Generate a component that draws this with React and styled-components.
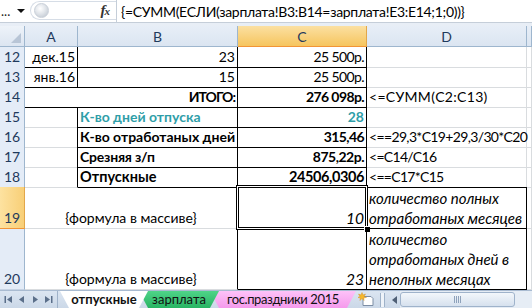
import styled, { createGlobalStyle } from 'styled-components';

const GlobalStyle = createGlobalStyle`
  html, body { margin: 0; padding: 0; background: #fff; }
  body {
    width: 532px;
    height: 308px;
    overflow: hidden;
    font-family: Lato, 'Liberation Sans', sans-serif;
    font-size: 14px;
    color: #000;
  }
`;

const COLS = '25px 53px 160px 129px 160px 1fr';
const GRID = '#d9dcdf';
const BLACK = '#000';

const Window = styled.div`
  width: 532px;
  height: 308px;
  display: flex;
  flex-direction: column;
  overflow: hidden;
  background: #fff;
`;

const FormulaBar = styled.div`
  height: 23px;
  display: flex;
  align-items: stretch;
  background: #fff;
  border-bottom: 1px solid #c5ced9;
  box-sizing: border-box;
`;

const NameBox = styled.div`
  width: 30px;
  display: flex;
  align-items: center;
  justify-content: space-between;
  padding: 0 5px 0 1px;
  box-sizing: border-box;
  font-size: 13px;
  color: #222;
`;

const Arrow = styled.span`
  width: 0;
  height: 0;
  border-left: 4px solid transparent;
  border-right: 4px solid transparent;
  border-top: 4px solid #111;
`;

const ButtonGroup = styled.div`
  width: 86px;
  margin: 1px 0 2px;
  display: flex;
  align-items: center;
  justify-content: space-between;
  border: 1px solid #d6dde6;
  border-right: none;
  border-radius: 10px 0 0 10px;
  padding: 0 7px 0 3px;
  box-sizing: border-box;
`;

const Knob = styled.span`
  width: 13px;
  height: 13px;
  border-radius: 50%;
  background: radial-gradient(circle at 40% 35%, #fff 0%, #e1e5ea 45%, #b9c1cb 100%);
  border: 1px solid #c9d0d9;
`;

const Fx = styled.span`
  font-family: 'Liberation Serif', serif;
  font-style: italic;
  font-weight: bold;
  font-size: 15px;
  color: #333;
  letter-spacing: -1px;
  small {
    font-size: 11px;
  }
`;

const FormulaInput = styled.div`
  flex: 1;
  display: flex;
  align-items: center;
  padding-left: 4px;
  border-left: 1px solid #c5ced9;
  font-size: 14px;
  letter-spacing: -0.3px;
  white-space: nowrap;
`;

const Band = styled.div`
  height: 3px;
  background: #e8eef6;
`;

const Row = styled.div`
  display: grid;
  grid-template-columns: ${COLS};
  height: ${p => p.$h}px;
  flex: none;
`;

const Corner = styled.div`
  position: relative;
  background: linear-gradient(#eef3f9, #dce5f1);
  border-right: 1px solid #9eb6ce;
  border-bottom: 1px solid #9eb6ce;
  box-sizing: border-box;
  &::after {
    content: '';
    position: absolute;
    right: 3px;
    bottom: 3px;
    border-left: 10px solid transparent;
    border-bottom: 10px solid #b8c5d6;
  }
`;

const ColHead = styled.div`
  display: flex;
  align-items: center;
  justify-content: center;
  font-size: 14px;
  color: #1f3a5c;
  box-sizing: border-box;
  border-right: 1px solid ${p => (p.$sel ? '#e2a74a' : '#9eb6ce')};
  border-bottom: 1px solid ${p => (p.$sel ? '#f29436' : '#9eb6ce')};
  background: ${p =>
    p.$sel ? 'linear-gradient(#fbe0a2, #f6c55e)' : 'linear-gradient(#e7eef7, #dbe5f1)'};
`;

const RowHead = styled.div`
  display: flex;
  align-items: flex-end;
  justify-content: center;
  padding-bottom: 1px;
  line-height: 19px;
  font-size: 14px;
  color: #1f3a5c;
  box-sizing: border-box;
  border-right: 1px solid ${p => (p.$sel ? '#e2a74a' : '#9eb6ce')};
  border-bottom: 1px solid ${p => (p.$sel ? '#f29436' : '#c5d2e3')};
  background: ${p => (p.$sel ? 'linear-gradient(90deg, #fde2a0, #f8cf77)' : '#e4ecf7')};
`;

const Cell = styled.div`
  position: relative;
  grid-column: span ${p => p.$span || 1};
  display: flex;
  flex-direction: column;
  justify-content: flex-end;
  align-items: ${p =>
    p.$align === 'right' ? 'flex-end' : p.$align === 'center' ? 'center' : 'flex-start'};
  text-align: ${p => p.$align || 'left'};
  padding: 0 2px;
  box-sizing: border-box;
  border-right: 1px solid ${p => p.$rb || GRID};
  border-bottom: 1px solid ${p => p.$bb || GRID};
  line-height: 20px;
  font-size: ${p => p.$size || 14}px;
  letter-spacing: ${p => p.$ls || 0}px;
  font-weight: ${p => (p.$bold ? 700 : 400)};
  font-style: ${p => (p.$italic ? 'italic' : 'normal')};
  color: ${p => p.$color || '#000'};
  white-space: nowrap;
  overflow: visible;
`;

const Line = styled.span`
  display: block;
  height: 20px;
`;

const Selection = styled.div`
  position: absolute;
  top: -2px;
  left: -2px;
  right: -2px;
  bottom: -2px;
  border: 1px solid #000;
  box-shadow: inset 0 0 0 1px #fff, inset 0 0 0 2px #000;
  pointer-events: none;
  &::after {
    content: '';
    position: absolute;
    right: -4px;
    bottom: -4px;
    width: 5px;
    height: 5px;
    background: #000;
    border: 1px solid #fff;
  }
`;

const TabBar = styled.div`
  height: 18px;
  display: flex;
  align-items: flex-start;
  background: linear-gradient(#dbe5f1, #cbd8e8);
  border-top: 1px solid #a9bbd1;
  box-sizing: border-box;
`;

const NavGroup = styled.div`
  width: 58px;
  height: 100%;
  display: flex;
  align-items: center;
  justify-content: space-around;
  padding: 0 2px;
  box-sizing: border-box;
  border-right: 1px solid #9fb2c9;
`;

const Tabs = styled.div`
  display: flex;
  height: 17px;
  padding-left: 2px;
`;

const Tab = styled.div`
  position: relative;
  z-index: ${p => (p.$active ? 3 : p.$z || 1)};
  width: ${p => p.$w}px;
  margin-left: ${p => (p.$first ? 0 : -9)}px;
  display: flex;
  align-items: center;
  justify-content: center;
  padding-bottom: 1px;
  box-sizing: border-box;
  font-size: 13px;
  letter-spacing: ${p => p.$ls || 0}px;
  font-weight: ${p => (p.$active ? 700 : 400)};
  color: #111;
  background: ${p => p.$bg};
  clip-path: polygon(0 0, 100% 0, calc(100% - 9px) 100%, 9px 100%);
`;

const NewSheet = styled.div`
  width: 22px;
  height: 17px;
  display: flex;
  align-items: center;
  justify-content: center;
`;

const Splitter = styled.div`
  width: 3px;
  height: 14px;
  margin: 2px 3px 0 2px;
  border-left: 1px solid #9fb2c9;
  border-right: 1px solid #9fb2c9;
  background: #eef3f9;
`;

const ScrollArrow = styled.div`
  width: 12px;
  height: 17px;
  display: flex;
  align-items: center;
  justify-content: center;
`;

const Track = styled.div`
  flex: 1;
  height: 17px;
  padding: 1px 0;
  box-sizing: border-box;
  background: #e6edf5;
`;

const Thumb = styled.div`
  width: 115px;
  height: 15px;
  box-sizing: border-box;
  border: 1px solid #9fb3cb;
  border-radius: 3px;
  background: linear-gradient(#f3f7fb, #d6e1ee);
  display: flex;
  align-items: center;
  justify-content: center;
  gap: 1px;
  span {
    width: 1px;
    height: 7px;
    background: #8ea2bb;
  }
`;

const NavIcon = ({ dir, bar }) => (
  <svg width="9" height="9" viewBox="0 0 9 9">
    {dir === 'left' ? (
      <>
        {bar && <rect x="0.5" y="1" width="1.5" height="7" fill="#5b6f8a" />}
        <polygon points={bar ? '8,1 8,8 3,4.5' : '7,1 7,8 2,4.5'} fill="#5b6f8a" />
      </>
    ) : (
      <>
        {bar && <rect x="7" y="1" width="1.5" height="7" fill="#5b6f8a" />}
        <polygon points={bar ? '1,1 1,8 6,4.5' : '2,1 2,8 7,4.5'} fill="#5b6f8a" />
      </>
    )}
  </svg>
);

const NewSheetIcon = () => (
  <svg width="18" height="15" viewBox="0 0 18 15">
    <path d="M5 4.5 h8 l2 2 v7 h-10 z" fill="#fff" stroke="#7d8ea5" strokeWidth="1" />
    <path d="M4 0.5 l1 2.5 2.5-1 -1.5 2.5 2.5 1 -2.7 0.3 0.2 2.7 -2-2 -2 2 0.2-2.7 -2.7-0.3 2.5-1 -1.5-2.5 2.5 1z" fill="#f5b82e" stroke="#d88d12" strokeWidth="0.4" />
  </svg>
);

// box = cell drawn with a black border on all sides; lines = wrapped text
const rows = [
  {
    n: 12,
    h: 20,
    cells: [
      { t: 'дек.15', a: 'right', box: true },
      { t: '23', a: 'right', box: true },
      { t: '25 500р.', a: 'right', box: true, ls: -0.6 },
      {},
      {},
    ],
  },
  {
    n: 13,
    h: 20,
    cells: [
      { t: 'янв.16', a: 'right', box: true },
      { t: '15', a: 'right', box: true },
      { t: '25 500р.', a: 'right', box: true, ls: -0.6 },
      {},
      {},
    ],
  },
  {
    n: 14,
    h: 20,
    cells: [
      { t: 'ИТОГО:', a: 'right', bold: true, span: 2, box: true, ls: -1 },
      { t: '276 098р.', a: 'right', bold: true, box: true, ls: -0.6 },
      { t: '<=СУММ(C2:C13)', ls: 0.3 },
      {},
    ],
  },
  {
    n: 15,
    h: 20,
    cells: [
      {},
      { t: 'К-во дней отпуска', bold: true, color: '#2f9ea8', box: true },
      { t: '28', a: 'right', bold: true, color: '#2f9ea8', box: true },
      {},
      {},
    ],
  },
  {
    n: 16,
    h: 20,
    cells: [
      {},
      { t: 'К-во отработаных дней', bold: true, box: true },
      { t: '315,46', a: 'right', bold: true, box: true, ls: -0.6 },
      { t: '<==29,3*C19+29,3/30*C20', ls: -0.65 },
      {},
    ],
  },
  {
    n: 17,
    h: 20,
    cells: [
      {},
      { t: 'Срезняя з/п', bold: true, box: true, ls: -0.2 },
      { t: '875,22р.', a: 'right', bold: true, box: true, ls: -0.5 },
      { t: '<=C14/C16', ls: -0.7 },
      {},
    ],
  },
  {
    n: 18,
    h: 20,
    cells: [
      {},
      { t: 'Отпускные', bold: true, box: true, size: 14.5 },
      { t: '24506,0306', a: 'right', bold: true, box: true, size: 14.5, ls: -0.4 },
      { t: '<==C17*C15', ls: -0.7 },
      {},
    ],
  },
  {
    n: 19,
    h: 42,
    sel: true,
    cells: [
      { t: '{формула в массиве}', a: 'center', span: 2 },
      { t: '10', a: 'right', italic: true, box: true, selected: true, size: 15.5 },
      {
        lines: ['количество полных', 'отработаных месяцев'],
        italic: true,
        box: true,
        size: 15,
      },
      {},
    ],
  },
  {
    n: 20,
    h: 61,
    cells: [
      { t: '{формула в массиве}', a: 'center', span: 2 },
      { t: '23', a: 'right', italic: true, box: true, size: 15.5 },
      {
        lines: ['количество', 'отработаных дней в', 'неполных месяцах'],
        italic: true,
        box: true,
        size: 15,
      },
      {},
    ],
  },
];

// give every cell its starting column so neighbours can be looked up
const placed = rows.map(r => {
  let col = 0;
  return r.cells.map(c => {
    const p = { ...c, col };
    col += c.span || 1;
    return p;
  });
});

const cellAt = (ri, col) => {
  const row = placed[ri];
  if (!row) return null;
  return row.find(c => col >= c.col && col < c.col + (c.span || 1)) || null;
};

const bordersFor = (ri, ci) => {
  const c = placed[ri][ci];
  const next = placed[ri][ci + 1];
  const below = cellAt(ri + 1, c.col);
  return {
    rb: c.box || (next && next.box) ? BLACK : GRID,
    bb: c.box || (below && below.box) ? BLACK : GRID,
  };
};

const App = () => (
  <Window>
    <GlobalStyle />
    <FormulaBar>
      <NameBox>
        <span>...</span>
        <Arrow />
      </NameBox>
      <ButtonGroup>
        <Knob />
        <Fx>
          f<small>x</small>
        </Fx>
      </ButtonGroup>
      <FormulaInput>{'{=СУММ(ЕСЛИ(зарплата!B3:B14=зарплата!E3:E14;1;0))}'}</FormulaInput>
    </FormulaBar>
    <Band />
    <Row $h={21}>
      <Corner />
      <ColHead>A</ColHead>
      <ColHead>B</ColHead>
      <ColHead $sel>C</ColHead>
      <ColHead>D</ColHead>
      <ColHead />
    </Row>
    {rows.map((r, ri) => (
      <Row key={r.n} $h={r.h}>
        <RowHead $sel={r.sel}>{r.n}</RowHead>
        {placed[ri].map((c, ci) => {
          const { rb, bb } = bordersFor(ri, ci);
          return (
            <Cell
              key={ci}
              $span={c.span}
              $align={c.a}
              $bold={c.bold}
              $italic={c.italic}
              $color={c.color}
              $size={c.size}
              $ls={c.ls}
              $rb={rb}
              $bb={bb}
            >
              {c.lines ? c.lines.map(l => <Line key={l}>{l}</Line>) : c.t}
              {c.selected && <Selection />}
            </Cell>
          );
        })}
      </Row>
    ))}
    <TabBar>
      <NavGroup>
        <NavIcon dir="left" bar />
        <NavIcon dir="left" />
        <NavIcon dir="right" />
        <NavIcon dir="right" bar />
      </NavGroup>
      <Tabs>
        <Tab $first $active $w={88} $bg="#fff">
          отпускные
        </Tab>
        <Tab $w={80} $z={2} $bg="linear-gradient(#4fd488, #28b463)">
          зарплата
        </Tab>
        <Tab $w={146} $ls={-0.4} $bg="linear-gradient(#fdc2f8, #f59aec)">
          гос.праздники 2015
        </Tab>
      </Tabs>
      <NewSheet>
        <NewSheetIcon />
      </NewSheet>
      <Splitter />
      <ScrollArrow>
        <svg width="5" height="8" viewBox="0 0 5 8">
          <polygon points="5,0 5,8 0,4" fill="#4f5f75" />
        </svg>
      </ScrollArrow>
      <Track>
        <Thumb>
          <span />
          <span />
          <span />
          <span />
        </Thumb>
      </Track>
    </TabBar>
  </Window>
);

export default App;
